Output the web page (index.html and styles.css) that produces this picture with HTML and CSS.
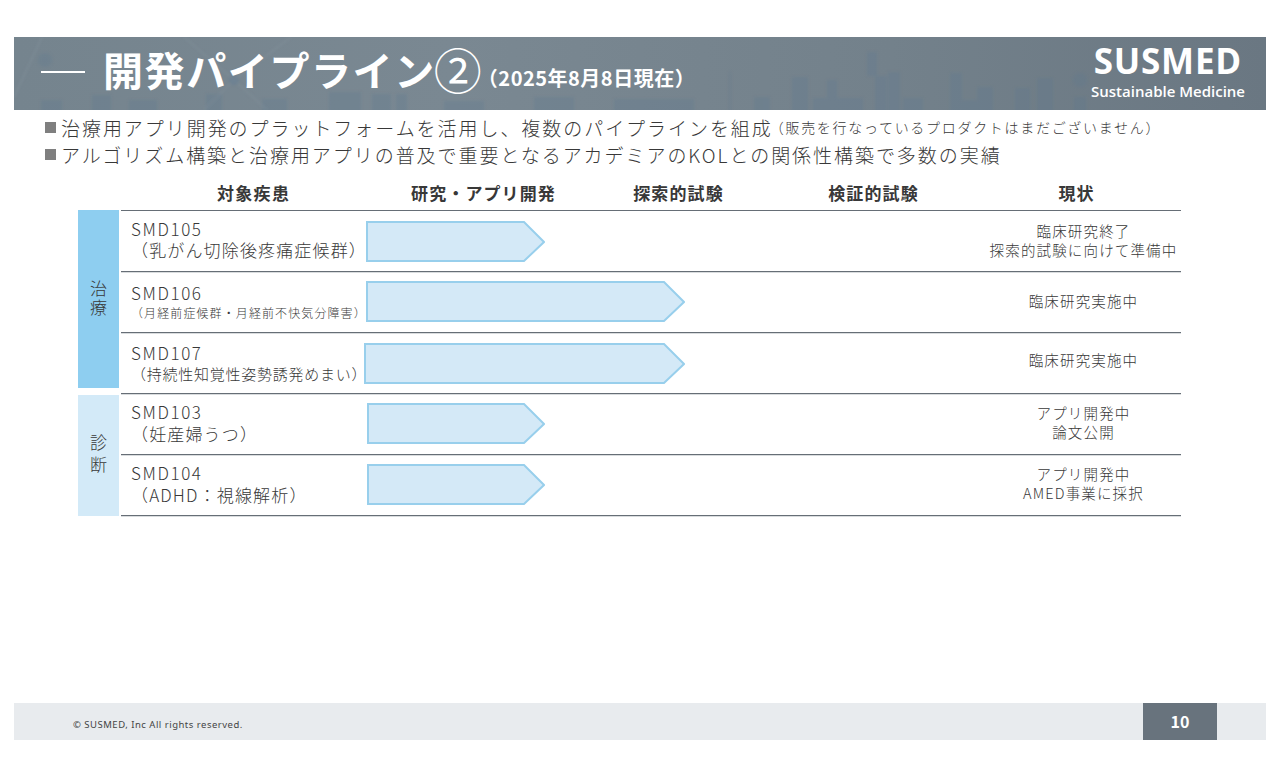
FILE: index.html
```html
<!DOCTYPE html>
<html lang="ja">
<head>
<meta charset="utf-8">
<title>開発パイプライン②</title>
<link rel="stylesheet" href="styles.css">
</head>
<body>
<div class="slide">
  <header class="banner">
    <svg class="banner-art" viewBox="0 0 1252 73" aria-hidden="true">
      <g class="art-layer">
        <g fill="#5d7891" opacity=".26">
          <path d="M27 76V63H48V76ZM78 76V58H97V76ZM115 76V63H143V76ZM192 76V57H208V76ZM248 76V62H273V76ZM315 76V55H347V76ZM358 76V57H377V76ZM382 76V57H393V76Z"/>
          <path d="M430 76V64H470V76ZM520 76V60H560V76ZM600 76V62H680V76Z"/>
          <path d="M715 76V35H717V76ZM740 76V60H756V76ZM778 76V40H794V76ZM799 76V61H849V76ZM813 76V43H823V76ZM861 76V39H873V76ZM874 76V35H886V76ZM853 15H863V39H853ZM889 76V61H909V76ZM936 76V36H948V76ZM939 76V63H968V76ZM963 76V50H979V76ZM1001 76V51H1016V76ZM1023 76V41H1039V76ZM1060 76V60H1072V76Z"/>
          <circle cx="31" cy="23" r="7"/>
          <circle cx="1066" cy="43" r="7"/>
        </g>
        <g fill="none" stroke="#98a6b0" stroke-width="1" opacity=".4">
          <path d="M28 0L0 60M170 0L220 43L277 0M220 43L190 73M220 43L253 73"/>
        </g>
        <circle class="art-node" cx="220" cy="43" r="5"/>
      </g>
    </svg>
    <div class="title-group">
      <span class="title-rule"></span>
      <h1 class="title">開発パイプライン<span class="title-num">②</span></h1>
      <span class="title-date">（2025年8月8日現在）</span>
    </div>
    <div class="logo">
      <div class="logo-name">SUSMED</div>
      <div class="logo-tag">Sustainable Medicine</div>
    </div>
  </header>

  <main class="content">
    <ul class="points">
      <li class="point"><span class="bullet"></span>治療用アプリ開発のプラットフォームを活用し、複数のパイプラインを組成<small class="point-note">（販売を行なっているプロダクトはまだございません）</small></li>
      <li class="point"><span class="bullet"></span>アルゴリズム構築と治療用アプリの普及で重要となるアカデミアのKOLとの関係性構築で多数の実績</li>
    </ul>

    <section class="pipeline">
      <div class="head-row">
        <div class="head h-target">対象疾患</div>
        <div class="head">研究・アプリ開発</div>
        <div class="head">探索的試験</div>
        <div class="head">検証的試験</div>
        <div class="head h-status">現状</div>
      </div>
      <div class="body-grid">
        <div class="cats">
          <div class="cat cat-treat"><span>治<br>療</span></div>
          <div class="cat cat-diag"><span>診<br>断</span></div>
        </div>
        <div class="rows">
          <div class="row">
            <div class="name name-up"><div class="code">SMD105</div><div class="disease">（乳がん切除後疼痛症候群）</div></div>
            <div class="track"><svg class="arrow arrow-short" viewBox="0 0 179 41"><path d="M1 1H158L178 21L158 40H1Z"/></svg></div>
            <div class="status">臨床研究終了<br>探索的試験に向けて準備中</div>
          </div>
          <div class="row">
            <div class="name"><div class="code code-low">SMD106</div><div class="disease disease-small">（月経前症候群・月経前不快気分障害）</div></div>
            <div class="track"><svg class="arrow arrow-long" viewBox="0 0 319 41"><path d="M1 1H298L318 21L298 40H1Z"/></svg></div>
            <div class="status status-up">臨床研究実施中</div>
          </div>
          <div class="row">
            <div class="name name-down"><div class="code">SMD107</div><div class="disease disease-mid">（持続性知覚性姿勢誘発めまい）</div></div>
            <div class="track track-wide"><svg class="arrow arrow-wide" viewBox="0 0 321 41"><path d="M1 1H300L320 21L300 40H1Z"/></svg></div>
            <div class="status status-up-more">臨床研究実施中</div>
          </div>
          <div class="row">
            <div class="name name-up"><div class="code">SMD103</div><div class="disease disease-gap">（妊産婦うつ）</div></div>
            <div class="track track-in"><svg class="arrow arrow-diag" viewBox="0 0 178 41"><path d="M1 1H157L177 21L157 40H1Z"/></svg></div>
            <div class="status status-up">アプリ開発中<br>論文公開</div>
          </div>
          <div class="row">
            <div class="name name-up"><div class="code">SMD104</div><div class="disease disease-gap">（ADHD：視線解析）</div></div>
            <div class="track track-in"><svg class="arrow arrow-diag" viewBox="0 0 178 41"><path d="M1 1H157L177 21L157 40H1Z"/></svg></div>
            <div class="status status-up">アプリ開発中<br>AMED事業に採択</div>
          </div>
        </div>
      </div>
    </section>
  </main>

  <footer class="footer">
    <div class="copyright">© SUSMED, Inc All rights reserved.</div>
    <div class="page-no">10</div>
  </footer>
</div>
</body>
</html>
```

FILE: styles.css
```css
* { box-sizing: border-box; }
html, body { margin: 0; height: 100%; background: #fff; }
body {
  font-family: "Noto Sans CJK JP", "Noto Sans", sans-serif;
  font-weight: 300;
  color: #383838;
  padding: 37px 14px;
  overflow: hidden;
}
.slide {
  height: 703px;
  display: flex;
  flex-direction: column;
}
.banner {
  position: relative;
  height: 73px;
  flex: none;
  display: flex;
  align-items: center;
  justify-content: space-between;
  background: linear-gradient(90deg, #75848e 0%, #7a8892 35%, #73818b 70%, #6a7782 100%);
  color: #fff;
}
.banner-art { position: absolute; inset: 0; width: 100%; height: 100%; }
.art-layer { filter: blur(1.5px); }
.art-node { fill: #5f7a92; opacity: .45; }
.title-group {
  position: relative;
  display: flex;
  align-items: center;
  padding-left: 27px;
  margin-top: -10px;
}
.title-rule { width: 44px; height: 2px; background: #fff; margin-right: 18px; margin-top: 6px; }
.title {
  margin: 0;
  display: flex;
  align-items: center;
  font-size: 40px;
  font-weight: 700;
  line-height: 1.2;
  letter-spacing: 1.6px;
}
.title-num { font-size: 48px; font-weight: 400; letter-spacing: 0; margin-left: -2px; }
.title-date {
  font-size: 20px;
  font-weight: 700;
  letter-spacing: 0.5px;
  margin-left: -4px;
  margin-top: 18px;
}
.logo {
  position: relative;
  width: 180px;
  padding-right: 21px;
  text-align: right;
  margin-top: -4px;
}
.logo-name {
  font-family: "Open Sans", sans-serif;
  font-size: 35px;
  font-weight: 700;
  line-height: 48px;
  letter-spacing: 0.8px;
  padding-right: 3px;
  margin-top: -6px;
  margin-bottom: -4px;
}
.logo-tag {
  font-family: "Open Sans", sans-serif;
  font-size: 15px;
  font-weight: 600;
  line-height: 20px;
  white-space: nowrap;
}
.content { flex: 1; padding-top: 3px; }
.points { list-style: none; margin: 0; padding: 0 0 0 31px; }
.point {
  display: flex;
  align-items: center;
  font-size: 19px;
  line-height: 27px;
  letter-spacing: 1.95px;
  white-space: nowrap;
}
.bullet { width: 11px; height: 11px; background: #7f7f7f; margin-right: 5px; flex: none; }
.point-note { font-size: 14px; letter-spacing: 1.7px; margin-top: 1px; margin-left: -3px; }
.pipeline { margin: 13px 0 0 64px; width: 1104px; }
.head-row {
  display: grid;
  grid-template-columns: 308px 195px 195px 195px 1fr;
  height: 29px;
  padding-bottom: 6px;
  align-items: center;
}
.head {
  font-size: 17px;
  font-weight: 700;
  letter-spacing: 1.1px;
  text-align: center;
  line-height: 1;
  white-space: nowrap;
}
.h-target { padding-left: 139px; text-align: left; letter-spacing: 1.3px; }
.body-grid { display: flex; }
.cats {
  flex: none;
  width: 41px;
  margin-right: 2px;
  display: flex;
  flex-direction: column;
}
.cat {
  display: flex;
  align-items: center;
  justify-content: center;
  font-size: 17px;
  line-height: 19px;
  text-align: center;
}
.cat-treat { height: 178px; background: #8ecef0; margin-bottom: 7px; padding-bottom: 4px; }
.cat-diag { height: 121px; background: #d3eaf8; padding-bottom: 5px; line-height: 22px; }
.rows { width: 1060px; }
.row {
  display: flex;
  align-items: center;
  height: 61px;
  padding-bottom: 2px;
  border-bottom: 1px solid #666e76;
  box-shadow: 0 1px 0 #d9dcde;
}
.row:first-child { height: 62px; border-top: 1px solid #666e76; }
.name {
  flex: none;
  width: 243px;
  padding-left: 10px;
  white-space: nowrap;
}
.name-up { margin-top: -1px; }
.name-down { margin-top: 2px; }
.code { font-size: 17px; line-height: 21px; letter-spacing: 1.6px; }
.code-low { margin-top: 2px; }
.disease { font-size: 17px; line-height: 22px; letter-spacing: 1.15px; }
.disease-gap { margin-top: 1px; }
.disease-small { font-size: 12px; letter-spacing: 1.1px; line-height: 20px; }
.disease-mid { font-size: 15px; letter-spacing: 0.75px; }
.track { flex: none; width: 622px; padding-left: 2px; }
.track-wide { padding-left: 0; }
.track-in { padding-left: 3px; }
.arrow { display: block; height: 41px; fill: #d4e9f7; stroke: #98cfec; stroke-width: 2; }
.arrow-short { width: 179px; margin-top: 3px; }
.arrow-long { width: 319px; }
.arrow-wide { width: 321px; margin-top: 2px; }
.arrow-diag { width: 178px; }
.status {
  flex: 1;
  text-align: center;
  font-size: 14.5px;
  line-height: 19px;
  letter-spacing: 1.15px;
  white-space: nowrap;
}
.status-up { margin-top: -2px; }
.status-up-more { margin-top: -6px; }
.footer {
  margin-top: auto;
  height: 37px;
  flex: none;
  display: flex;
  align-items: center;
  justify-content: space-between;
  background: #e8ebee;
  padding-right: 49px;
}
.copyright {
  font-family: "Noto Sans", sans-serif;
  font-weight: 400;
  font-size: 9.5px;
  letter-spacing: 0.5px;
  padding: 6px 0 0 59px;
  color: #444;
}
.page-no {
  width: 74px;
  height: 37px;
  background: #68737d;
  color: #fff;
  font-size: 16px;
  font-weight: 700;
  line-height: 36px;
  text-align: center;
}
```
